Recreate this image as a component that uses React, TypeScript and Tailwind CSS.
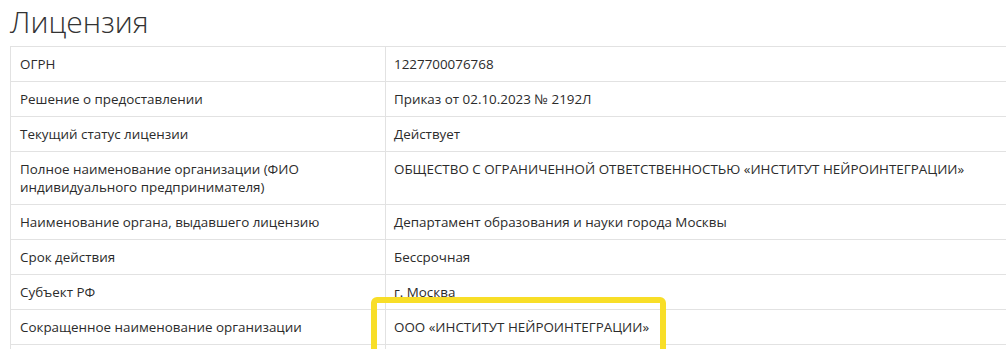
import React from "react";

const rows: [string, string][] = [
  ["ОГРН", "1227700076768"],
  ["Решение о предоставлении", "Приказ от 02.10.2023 № 2192Л"],
  ["Текущий статус лицензии", "Действует"],
  [
    "Полное наименование организации (ФИО индивидуального предпринимателя)",
    "ОБЩЕСТВО С ОГРАНИЧЕННОЙ ОТВЕТСТВЕННОСТЬЮ «ИНСТИТУТ НЕЙРОИНТЕГРАЦИИ»",
  ],
  ["Наименование органа, выдавшего лицензию", "Департамент образования и науки города Москвы"],
  ["Срок действия", "Бессрочная"],
  ["Субъект РФ", "г. Москва"],
  ["Сокращенное наименование организации", "ООО «ИНСТИТУТ НЕЙРОИНТЕГРАЦИИ»"],
  ["", ""],
];

export default function App() {
  return (
    <div
      className="relative w-[1006px] h-[349px] overflow-hidden bg-white text-[#2b2b2b] pl-[10px] pt-[3px]"
      style={{ fontFamily: '"Open Sans", "Noto Sans", sans-serif' }}
    >
      <h1 className="text-[30px] leading-[37px] font-light mb-[6px] text-[#333]">Лицензия</h1>
      <table className="border-collapse w-[1040px] text-[13.4px] leading-[18px]">
        <tbody>
          {rows.map(([k, v], i) => (
            <tr key={i}>
              <td className="w-[375px] border border-[#e2e2e2] px-[9px] py-[8px] align-top">
                {k === "Полное наименование организации (ФИО индивидуального предпринимателя)" ? (
                  <>
                    Полное наименование организации (ФИО
                    <br />
                    индивидуального предпринимателя)
                  </>
                ) : (
                  k || "\u00a0"
                )}
              </td>
              <td className="border border-[#e2e2e2] px-[8px] py-[8px] align-top">{v || "\u00a0"}</td>
            </tr>
          ))}
        </tbody>
      </table>
      <div className="absolute left-[371px] top-[297px] w-[295px] h-[70px] border-[6px] border-[#f8de28] rounded-[6px]" />
    </div>
  );
}
